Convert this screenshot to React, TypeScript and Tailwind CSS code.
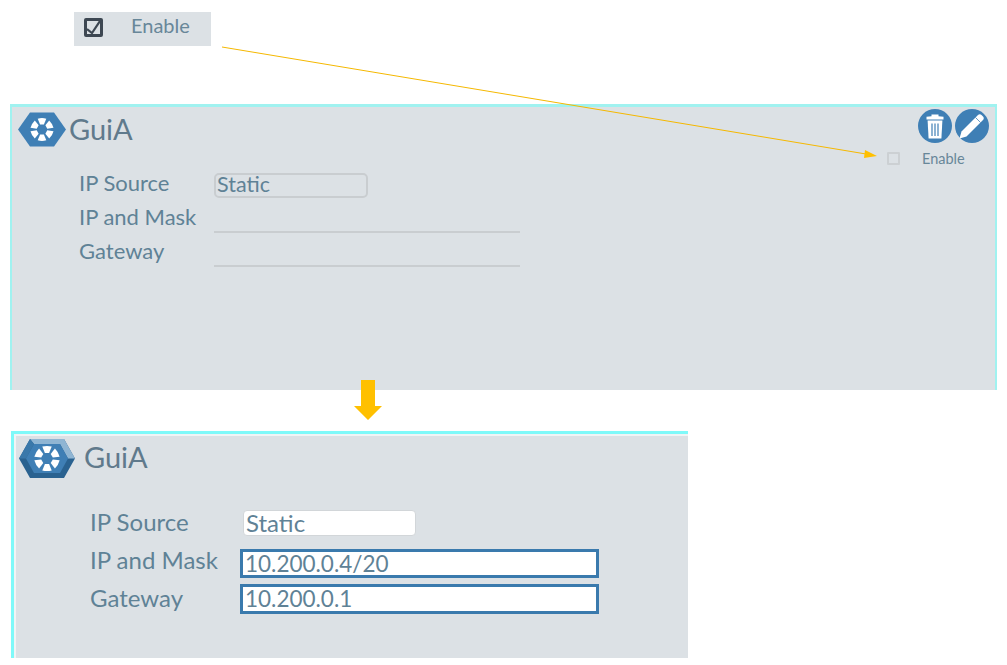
import React from 'react';

const font = { fontFamily: 'Lato, "Open Sans", sans-serif' };

const SEGMENT = 'M-4.3 -10.8 Q0 -12 4.3 -10.8 L1.9 -5 L-1.9 -5 Z';

const HelmWheel: React.FC = () => (
    <g fill="#ffffff">
        <path d={SEGMENT} />
        <path d={SEGMENT} transform="rotate(60)" />
        <path d={SEGMENT} transform="rotate(120)" />
        <path d={SEGMENT} transform="rotate(180)" />
        <path d={SEGMENT} transform="rotate(240)" />
        <path d={SEGMENT} transform="rotate(300)" />
    </g>
);

const FlatLogo: React.FC = () => (
    <svg width="48" height="35" viewBox="0 0 48 35" className="shrink-0">
        <polygon points="12,0.5 36,0.5 48,17.5 36,34.5 12,34.5 0,17.5" fill="#3f7fb5" />
        <g transform="translate(24 17.5)">
            <HelmWheel />
        </g>
    </svg>
);

const BevelLogo: React.FC = () => (
    <svg width="56" height="39" viewBox="0 0 56 39" className="shrink-0">
        <polygon points="11,0 45,0 56,19.5 45,39 11,39 0,19.5" fill="#2a6290" />
        <polygon points="11,0 45,0 56,19.5 49,19.5 41,5 15,5" fill="#8fb5d3" />
        <polygon points="11,0 15,5 7,19.5 0,19.5" fill="#3a78aa" />
        <polygon points="7,19.5 15,34 41,34 49,19.5 41,5 15,5" fill="#3f7fb5" />
        <g transform="translate(28 19.5) scale(1.1)">
            <HelmWheel />
        </g>
    </svg>
);

const TrashButton: React.FC = () => (
    <div className="w-[34px] h-[34px] rounded-full bg-[#3f7fb5] flex items-center justify-center">
        <svg width="18" height="25" viewBox="0 0 18 25">
            <path d="M5.5 2.2 L5.5 0.6 L12.5 0.6 L12.5 2.2 L17.5 2.8 L17.5 5.4 L0.5 5.4 L0.5 2.8 Z" fill="#ffffff" />
            <path d="M1.6 6.6 L16.4 6.6 L15.4 24.5 L2.6 24.5 Z" fill="#ffffff" />
            <g stroke="#3f7fb5" strokeWidth="1.2">
                <line x1="6" y1="9.5" x2="6" y2="22" />
                <line x1="9" y1="9.5" x2="9" y2="22" />
                <line x1="12" y1="9.5" x2="12" y2="22" />
            </g>
        </svg>
    </div>
);

const PencilButton: React.FC = () => (
    <div className="w-[34px] h-[34px] rounded-full bg-[#3f7fb5] flex items-center justify-center">
        <svg width="28" height="28" viewBox="0 0 28 28">
            <path d="M1.5 26.5 L3.5 19.5 L20 3 C21 2 22.5 2 23.5 3 L25 4.5 C26 5.5 26 7 25 8 L8.5 24.5 Z" fill="#ffffff" />
            <line x1="17.5" y1="5.5" x2="22.5" y2="10.5" stroke="#3f7fb5" strokeWidth="0.8" />
        </svg>
    </div>
);

const Row: React.FC<{ label: string; labelClass: string; rowClass: string; children: React.ReactNode }> = ({ label, labelClass, rowClass, children }) => (
    <div className={`flex items-center ${rowClass}`}>
        <span className={`leading-none text-[#5f8296] ${labelClass}`}>{label}</span>
        {children}
    </div>
);

export default function App() {
    return (
        <div className="relative w-[1007px] h-[665px] overflow-hidden bg-white pt-[12px]" style={font}>
            {/* cropped detail of the checked box */}
            <div className="ml-[74px] w-[137px] h-[34px] bg-[#dce1e5] flex items-center pl-[10px]">
                <div className="w-[19px] h-[19px] mb-[4px] border-[3px] border-[#3d4752] rounded-[2px] flex items-center justify-center">
                    <svg width="13" height="13" viewBox="0 0 13 13">
                        <path d="M0 8 L5 12 L13 0" fill="none" stroke="#3d4752" strokeWidth="2.2" />
                    </svg>
                </div>
                <span className="ml-[28px] mb-[8px] text-[20px] leading-none text-[#688799]">Enable</span>
            </div>

            {/* disabled panel */}
            <div className="ml-[10px] mt-[58px] w-[987px] h-[286px] bg-[#dce1e5] border-t-[3px] border-x-2 border-[#a0f2f0] flex flex-col">
                <div className="flex justify-between pl-[6px] pr-[6px]">
                    <div className="flex items-center gap-[3px] mt-[5px] h-[35px]">
                        <FlatLogo />
                        <span className="text-[29px] leading-none mb-[2px] text-[#607a8c]">GuiA</span>
                    </div>
                    <div className="flex flex-col items-end pt-[2px]">
                        <div className="flex gap-[3px]">
                            <TrashButton />
                            <PencilButton />
                        </div>
                    </div>
                </div>
                <div className="relative">
                    <div className="absolute left-[875px] top-[5px] w-[13px] h-[13px] border-2 border-[#ccd0d3] rounded-[1px]" />
                    <span className="absolute left-[910px] top-[4px] text-[14.5px] leading-[16px] text-[#688799]">Enable</span>
                </div>
                <div className="pl-[67px] mt-[21px]">
                    <Row label="IP Source" labelClass="w-[135px] mb-[4px] text-[22px]" rowClass="h-[34px]">
                        <div className="w-[154px] h-[25px] border-2 border-[#c9cdd0] rounded-[5px] flex items-center pl-[1px] pb-[2px] text-[21.5px] text-[#5f8296]">Static</div>
                    </Row>
                    <Row label="IP and Mask" labelClass="w-[135px] mb-[4px] text-[22px]" rowClass="h-[34px]">
                        <div className="w-[306px] h-[2px] bg-[#c9cdd0] mt-[25px]" />
                    </Row>
                    <Row label="Gateway" labelClass="w-[135px] mb-[4px] text-[22px]" rowClass="h-[34px]">
                        <div className="w-[306px] h-[2px] bg-[#c9cdd0] mt-[25px]" />
                    </Row>
                </div>
            </div>

            {/* enabled panel */}
            <div className="ml-[11px] mt-[41px] w-[677px] h-[227px] bg-[#dce1e5] border-t-[3px] border-l-[3px] border-[#7ff9f9]">
                <div className="h-full border-t-2 border-l-2 border-[#f1f4f5]">
                    <div className="flex items-center gap-[9px] pl-[3px] mt-[3px] h-[39px]">
                        <BevelLogo />
                        <span className="text-[29px] leading-none mb-[4px] text-[#607a8c]">GuiA</span>
                    </div>
                    <div className="pl-[74px] mt-[32px]">
                        <Row label="IP Source" labelClass="w-[153px] mb-[2px] text-[24px]" rowClass="h-[26px]">
                            <div className="w-[173px] h-[26px] bg-white border border-[#d2d6d9] rounded-[4px] flex items-center pl-[2px] text-[24px] text-[#5f8296]">Static</div>
                        </Row>
                        <Row label="IP and Mask" labelClass="w-[150px] mb-[7px] text-[24px]" rowClass="h-[29px] mt-[13px]">
                            <div className="w-[359px] h-[29px] bg-white border-[3px] border-[#3a7aad] flex items-center pl-[2px] text-[22.5px] text-[#5f8296]">10.200.0.4/20</div>
                        </Row>
                        <Row label="Gateway" labelClass="w-[150px] mb-[2px] text-[24px]" rowClass="h-[30px] mt-[6px]">
                            <div className="w-[359px] h-[30px] bg-white border-[3px] border-[#3a7aad] flex items-center pl-[2px] text-[22.5px] text-[#5f8296]">10.200.0.1</div>
                        </Row>
                    </div>
                </div>
            </div>

            {/* annotation arrows */}
            <svg className="absolute left-0 top-0 pointer-events-none" width="1007" height="665">
                <line x1="222" y1="47" x2="866" y2="154" stroke="#f5b800" strokeWidth="1" />
                <polygon points="877,156 865,150 864,158" fill="#ffc000" />
                <polygon points="361,380 375,380 375,406 382,406 368,420 354,406 361,406" fill="#ffc000" />
            </svg>
        </div>
    );
}
